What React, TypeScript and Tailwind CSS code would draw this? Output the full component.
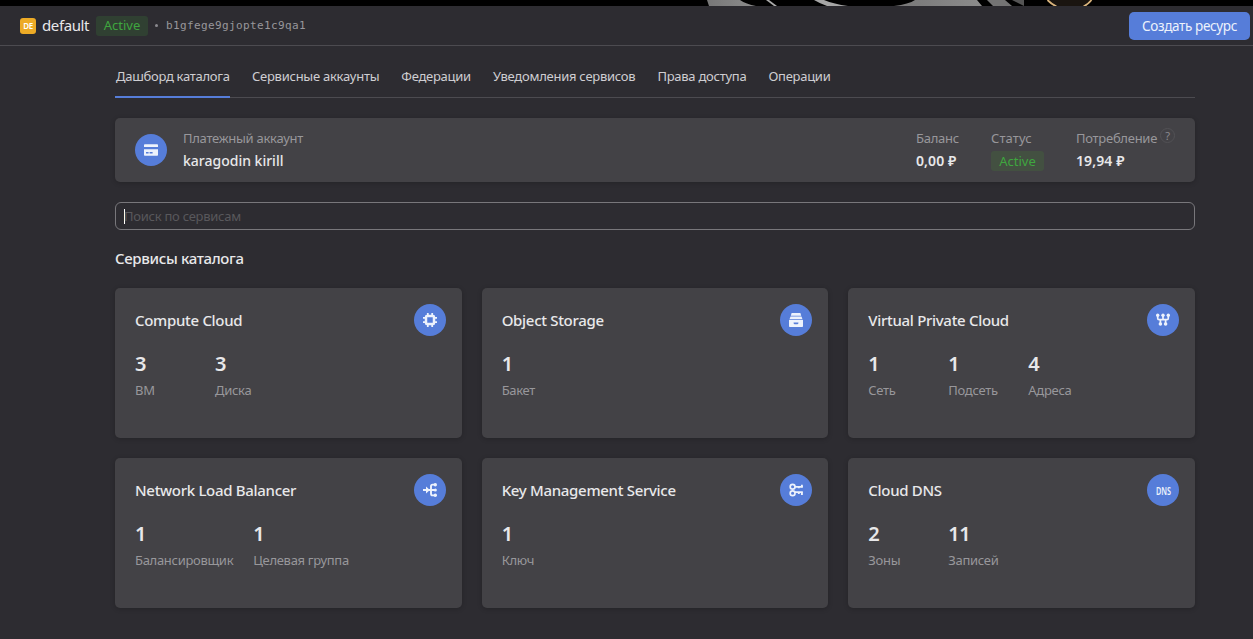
import type { ReactNode } from 'react';

type Stat = { value: string; label: string };
type Service = { title: string; icon: ReactNode; stats: Stat[] };

const CpuIcon = () => (
  <svg width="14" height="14" viewBox="0 0 14 14" fill="none">
    <rect x="3" y="3" width="8" height="8" rx="1" stroke="#edf2fc" strokeWidth="2.5" />
    <path
      d="M4.8 0v2.4M9.2 0v2.4M4.800 11.600V14M9.200 11.600V14M0 4.800h2.400M0 9.200h2.400M11.600 4.800H14M11.600 9.200H14"
      stroke="#edf2fc"
      strokeWidth="1.8"
    />
  </svg>
);

const DrawerIcon = () => (
  <svg width="14" height="14" viewBox="0 0 14 14" fill="#edf2fc">
    <path d="M2.600 0h8.800l.8 2.700H1.800zM1.500 3.500h11l.9 2.500H.6z" />
    <path fillRule="evenodd" d="M.5 6.800h13a.5.5 0 0 1 .5.5v5.900a.8.8 0 0 1-.8.8H.8a.8.8 0 0 1-.8-.8V7.300a.5.500 0 0 1 .5-.5zM4.600 9.600v.9l.9.800h3l.9-.8v-.9z" />
  </svg>
);

const NetworkIcon = () => (
  <svg width="14" height="14" viewBox="0 0 14 14" fill="none">
    <path d="M1.700 2v3.300q0 1.400 1.400 1.400h7.800q1.400 0 1.400-1.400V2M7 2v4.700M4.400 6.700v5M9.600 6.700v5" stroke="#edf2fc" strokeWidth="1.700" />
    <g fill="#edf2fc">
      <circle cx="1.7" cy="2.2" r="1.7" />
      <circle cx="7" cy="2.2" r="1.7" />
      <circle cx="12.3" cy="2.2" r="1.7" />
      <circle cx="4.4" cy="11" r="1.8" />
      <circle cx="9.6" cy="11" r="1.8" />
    </g>
  </svg>
);

const BalancerIcon = () => (
  <svg width="14" height="14" viewBox="0 0 14 14" fill="none">
    <path d="M0 7h12.500M12.300 1.600H9.600q-1.600 0-1.600 1.600v7.600q0 1.600 1.600 1.600h2.700" stroke="#edf2fc" strokeWidth="1.900" />
    <path d="M3 3.500 6.900 7 3 10.500z" fill="#edf2fc" />
    <g fill="#edf2fc">
      <circle cx="12.3" cy="1.7" r="1.7" />
      <circle cx="12.3" cy="7" r="1.6" />
      <circle cx="12.3" cy="12.3" r="1.7" />
    </g>
  </svg>
);

const KeysIcon = () => (
  <svg width="14" height="14" viewBox="0 0 14 14" fill="none" stroke="#edf2fc" strokeWidth="1.7">
    <circle cx="3.6" cy="3.8" r="2.4" />
    <circle cx="3.6" cy="10.2" r="2.4" />
    <path d="M6 3.900H13.800M6 9.200H13.800" />
    <path d="M12.900 1.800v2.500M9.800 4v1.300M12.900 9.200v2.700M9.800 9.200v1.700" strokeWidth="1.900" />
  </svg>
);

const CardIcon = () => (
  <svg width="14" height="12" viewBox="0 0 14 12" fill="#edf2fc">
    <path d="M.8.3h12.400a.8.8 0 0 1 .8.8V3H0V1.100A.8.8 0 0 1 .8.300z" />
    <path fillRule="evenodd" d="M0 5.200h14v5.700a.8.8 0 0 1-.8.8H.8a.8.8 0 0 1-.8-.8zM2 8v1.500h2.600V8zM5.600 8v1.500h3V8z" />
  </svg>
);

const DnsIcon = () => (
  <span className="inline-block scale-x-[0.66] text-[11px] leading-none font-semibold text-[#edf2fc]">DNS</span>
);

const tabs = ['Дашборд каталога', 'Сервисные аккаунты', 'Федерации', 'Уведомления сервисов', 'Права доступа', 'Операции'];

const services: Service[] = [
  { title: 'Compute Cloud', icon: <CpuIcon />, stats: [{ value: '3', label: 'ВМ' }, { value: '3', label: 'Диска' }] },
  { title: 'Object Storage', icon: <DrawerIcon />, stats: [{ value: '1', label: 'Бакет' }] },
  {
    title: 'Virtual Private Cloud',
    icon: <NetworkIcon />,
    stats: [{ value: '1', label: 'Сеть' }, { value: '1', label: 'Подсеть' }, { value: '4', label: 'Адреса' }],
  },
  {
    title: 'Network Load Balancer',
    icon: <BalancerIcon />,
    stats: [{ value: '1', label: 'Балансировщик' }, { value: '1', label: 'Целевая группа' }],
  },
  { title: 'Key Management Service', icon: <KeysIcon />, stats: [{ value: '1', label: 'Ключ' }] },
  { title: 'Cloud DNS', icon: <DnsIcon />, stats: [{ value: '2', label: 'Зоны' }, { value: '11', label: 'Записей' }] },
];

const Disc = ({ children }: { children: ReactNode }) => (
  <div className="flex size-8 shrink-0 items-center justify-center rounded-full bg-[#567dd9]">{children}</div>
);

const WallpaperStrip = () => (
  <svg className="block h-1.5 w-full shrink-0 bg-black" viewBox="0 0 1253 6" preserveAspectRatio="none">
    <defs>
      <linearGradient id="steel" x1="0" x2="1">
        <stop offset="0" stopColor="#777" />
        <stop offset="1" stopColor="#8c8c8c" />
      </linearGradient>
    </defs>
    <path d="M707 0h33q6 4 16 6h-47z" fill="url(#steel)" />
    <path d="M766 0h3l8 6h-3z" fill="#aaa" />
    <path d="M814 0h10q10 4 24 6h-21q-8-3-13-6z" fill="#a6a6a6" />
    <path d="M915 0h62l5 6h-88q15-2 21-6z" fill="url(#steel)" />
    <path d="M987 0h18l7 6h-19z" fill="#747474" />
    <path d="M1012 0h12v6z" fill="#555" />
    <path d="M1048 0h43l-8 6h-26z" fill="#1a1510" />
    <path d="M1047.500 0q4 4 9 6.500M1091.500 0q-3 4-8 6.500" fill="none" stroke="#d9b47c" strokeWidth="1.800" />
  </svg>
);

const ServiceCard = ({ title, icon, stats }: Service) => (
  <article className="h-[150px] rounded-[5px] bg-[#434246] pt-4 pr-4 pl-5 shadow-[0_1px_5px_rgba(0,0,0,0.2)]">
    <div className="flex h-8 items-center justify-between">
      <h3 className="text-[15px] leading-5 font-medium tracking-[-0.31px] text-[#e8e8ea]">{title}</h3>
      <Disc>{icon}</Disc>
    </div>
    <div className="mt-3.5 flex gap-5">
      {stats.map((s) => (
        <div key={s.label} className="min-w-[60px]">
          <div className="text-xl leading-7 font-semibold tracking-[-0.4px] text-[#e8e8ea]">{s.value}</div>
          <div className="mt-[3px] text-[13px] leading-[18px] tracking-[-0.3px] whitespace-nowrap text-[#98979b]">{s.label}</div>
        </div>
      ))}
    </div>
  </article>
);

export default function App() {
  return (
    <div className="flex h-[639px] w-[1253px] flex-col overflow-hidden bg-[#2d2c31] font-['Noto_Sans',sans-serif] text-[#e8e8ea]">
      <WallpaperStrip />
      <header className="flex h-10 shrink-0 items-center border-b border-[#4c4b50] pr-[3px] pl-5">
        <div className="flex size-4 items-center justify-center rounded-[3px] bg-[#edab26] text-[8px] font-semibold tracking-[-0.3px] text-white">DE</div>
        <span className="-mt-px ml-1.5 w-[47px] text-[15px] leading-5 tracking-[-0.4px]">default</span>
        <span className="ml-[7px] flex h-5 w-[52px] items-center justify-center rounded-[3px] bg-[#304032] text-[13px] text-[#3fa63f]">Active</span>
        <span className="ml-[7px] size-[3px] rounded-full bg-[#8b8a8f]" />
        <span className="ml-2 pt-px font-['DejaVu_Sans_Mono',monospace] text-[11px] tracking-[0.38px] text-[#98979b]">b1gfege9gjopte1c9qa1</span>
        <button className="ml-auto h-7 w-[121px] rounded-[5px] bg-[#567dd9] pt-0.5 text-[13.5px] tracking-[-0.35px] text-[#edf2fc]">Создать ресурс</button>
      </header>

      <main className="ml-[115px] w-[1080px]">
        <nav className="flex h-[52px] gap-[22px] border-b border-[#4c4b50]">
          {tabs.map((t, i) => (
            <a
              key={t}
              className={
                i === 0
                  ? 'h-[52px] w-[115px] border-b-2 border-[#567dd9] pl-px text-[13px] leading-[61px] tracking-[-0.28px] whitespace-nowrap text-[#cfced2]'
                  : 'h-[52px] text-[13px] leading-[61px] tracking-[-0.26px] whitespace-nowrap text-[#cfced2]'
              }
            >
              {t}
            </a>
          ))}
        </nav>

        <section className="mt-5 flex h-16 items-center rounded-[5px] bg-[#434246] pl-5 shadow-[0_1px_5px_rgba(0,0,0,0.2)]">
          <Disc><CardIcon /></Disc>
          <div className="ml-4 flex-1">
            <div className="pt-px text-[13px] leading-[18px] tracking-[-0.28px] text-[#98979b]">Платежный аккаунт</div>
            <div className="mt-[3px] text-[14px] leading-[22px] font-medium">karagodin kirill</div>
          </div>
          <div className="w-[75px]">
            <div className="pt-px text-[13px] leading-[18px] tracking-[-0.24px] text-[#98979b]">Баланс</div>
            <div className="mt-[3px] text-[14px] leading-[22px] font-semibold tracking-[0.1px]">0,00 ₽</div>
          </div>
          <div className="w-[85px]">
            <div className="pt-px text-[13px] leading-[18px] tracking-[0.1px] text-[#98979b]">Статус</div>
            <div className="mt-[3px] flex h-[22px] items-center">
              <span className="flex h-5 w-[53px] items-center justify-center rounded-[3px] bg-[#435041] pt-px text-[13px] text-[#3fa63f]">Active</span>
            </div>
          </div>
          <div className="w-[119px]">
            <div className="flex pt-px text-[13px] leading-[18px] tracking-[-0.27px] text-[#98979b]">
              Потребление
              <span className="ml-[3px] -mt-px flex size-[15px] items-center justify-center rounded-full border border-[#525155] text-[11px] tracking-normal text-[#8b8a8f]">?</span>
            </div>
            <div className="mt-[3px] text-[14px] leading-[22px] font-semibold tracking-[0.1px]">19,94 ₽</div>
          </div>
        </section>

        <div className="mt-5 flex h-7 items-center rounded-[6px] border border-[#78777b] pl-2">
          <span className="h-[15px] w-px bg-white" />
          <span className="-ml-px text-[13px] leading-[18px] tracking-[-0.26px] text-[#59585c]">Поиск по сервисам</span>
        </div>

        <h2 className="mt-[18px] text-[15px] leading-5 font-medium tracking-[-0.34px]">Сервисы каталога</h2>

        <div className="mt-5 grid grid-cols-3 gap-5">
          {services.map((s) => (
            <ServiceCard key={s.title} {...s} />
          ))}
        </div>
      </main>
    </div>
  );
}
